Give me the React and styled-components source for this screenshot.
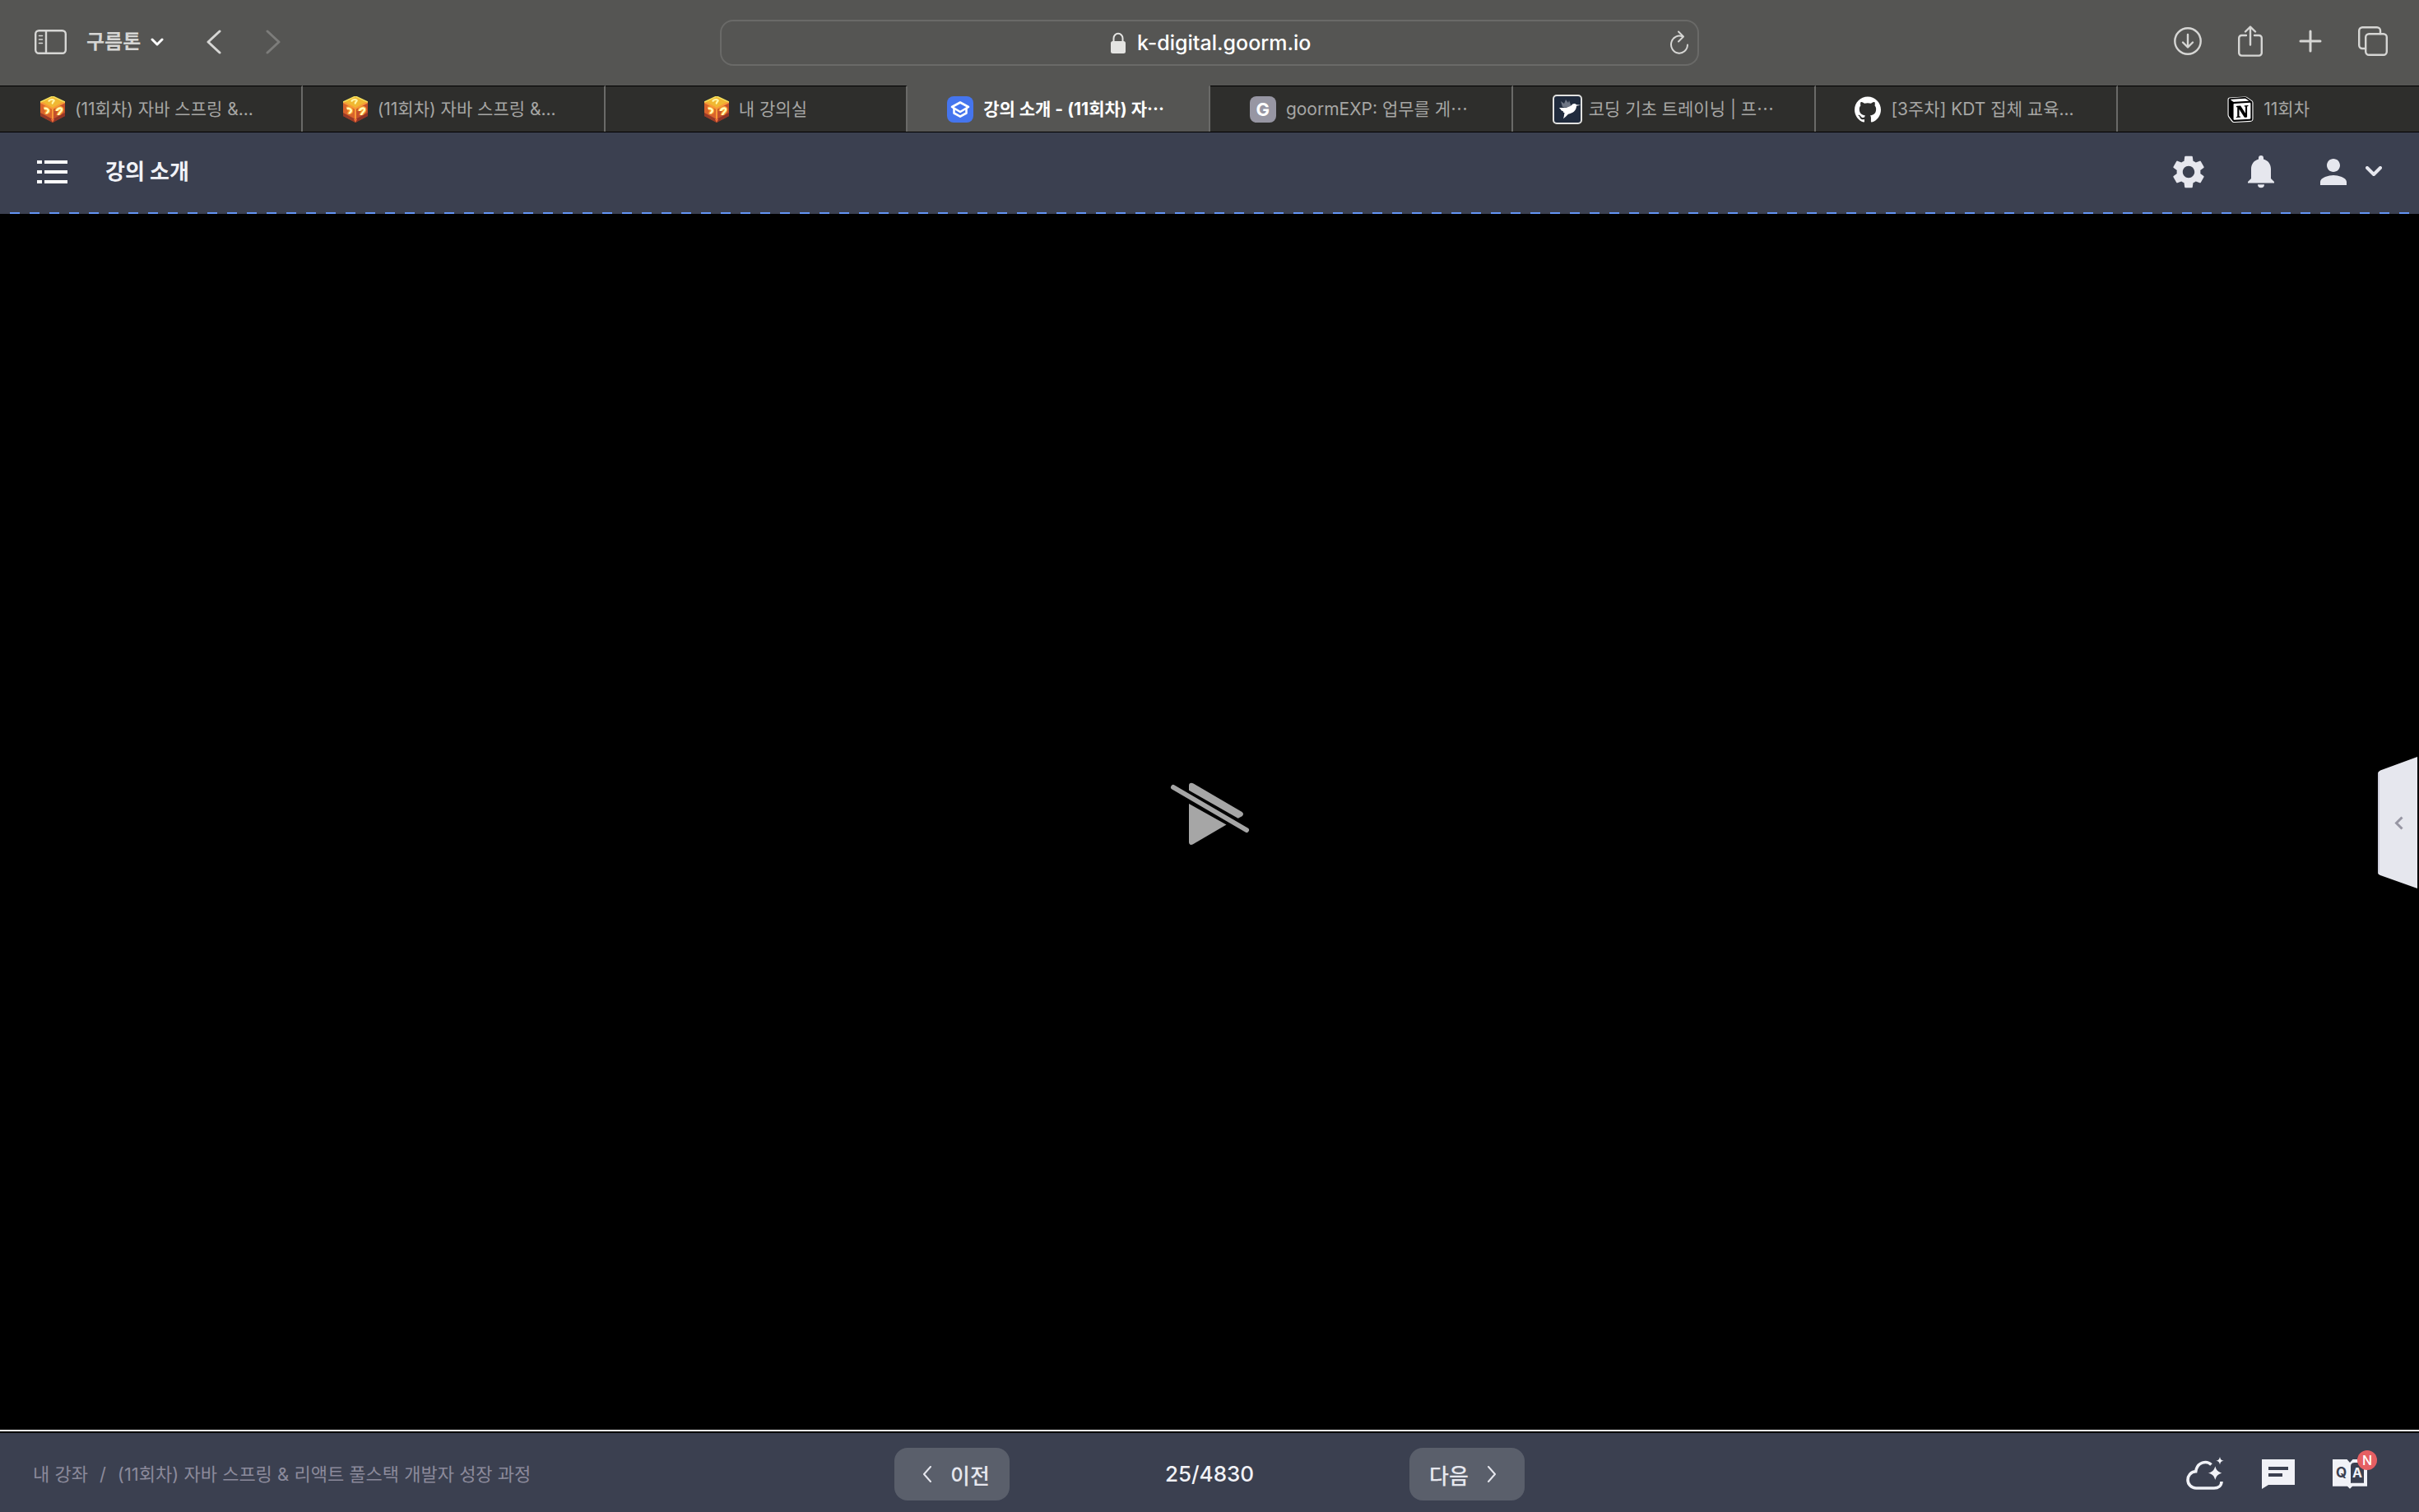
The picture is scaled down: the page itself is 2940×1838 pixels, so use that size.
import React from 'react';
import styled, { createGlobalStyle } from 'styled-components';
import { MdSettings, MdPerson } from 'react-icons/md';
import { SiGithub, SiNotion } from 'react-icons/si';

const GlobalStyle = createGlobalStyle`
  * {
    box-sizing: border-box;
  }
  body {
    margin: 0;
    background-color: #000;
    font-family: Inter, 'Noto Sans CJK KR', sans-serif;
  }
  button, input {
    font-family: inherit;
    margin: 0;
    padding: 0;
    border: none;
    background: none;
    color: inherit;
  }
  button {
    cursor: pointer;
  }
  a {
    color: inherit;
    text-decoration: none;
  }
  svg {
    display: block;
    flex-shrink: 0;
  }
`;

const Page = styled.div`
  display: flex;
  flex-direction: column;
  min-height: 100vh;
`;

/* Browser toolbar */

const Toolbar = styled.header`
  display: grid;
  grid-template-columns: 1fr minmax(0, 1190px) 1fr;
  align-items: center;
  height: 104px;
  background-color: #555553;
  color: #d6d6d4;
`;

const ToolbarLeft = styled.div`
  display: flex;
  align-items: center;
  padding: 0 0 2px 42px;
`;

const ToolbarRight = styled.div`
  display: flex;
  align-items: center;
  justify-content: flex-end;
  gap: 44px;
  padding: 0 38px 4px 0;
`;

const IconButton = styled.button`
  display: flex;
  align-items: center;
  justify-content: center;
  opacity: ${(props) => (props.$dim ? 0.3 : 1)};
`;

const ProfileButton = styled.button`
  display: flex;
  align-items: center;
  gap: 12px;
  margin: 0 52px 0 23px;
  font-size: 24px;
  font-weight: 700;
  line-height: 32px;
`;

const NavButtons = styled.div`
  display: flex;
  gap: 54px;
`;

const AddressBar = styled.form`
  display: grid;
  grid-template-columns: 1fr auto 1fr;
  align-items: center;
  height: 56px;
  padding: 0 10px 0 16px;
  border: 2px solid #6a6a68;
  border-radius: 16px;
`;

const AddressLabel = styled.label`
  grid-column: 2;
  display: flex;
  align-items: center;
  gap: 14px;
`;

const AddressInput = styled.input`
  width: 214px;
  color: #fff;
  font-size: 25px;
  font-weight: 500;
  line-height: 32px;
  outline: none;
`;

const ReloadButton = styled(IconButton)`
  justify-self: end;
`;

/* Browser tabs */

const TabStrip = styled.nav`
  display: flex;
  height: 57px;
  background-color: #555553;
  border-bottom: 1px solid #000;
`;

const Tab = styled.a`
  box-sizing: content-box;
  flex: 1 1 0;
  min-width: 0;
  display: flex;
  align-items: center;
  justify-content: center;
  gap: ${(props) => (props.$wideIcon ? '8px' : '12px')};
  border-top: 1px solid ${(props) => (props.$active ? '#555553' : '#000')};
  border-right: 2px solid #6a6a68;
  background-color: ${(props) => (props.$active ? '#555553' : '#2e2e2c')};
  color: ${(props) => (props.$active ? '#fff' : '#a6a6a4')};
  font-size: 21px;
  font-weight: ${(props) => (props.$active ? 700 : 400)};
  line-height: 32px;
  &:last-child {
    border-right: none;
  }
`;

const TabTitle = styled.span`
  width: ${(props) => (props.$cut ? '226px' : 'auto')};
  overflow: hidden;
  white-space: nowrap;
`;

const LetterIcon = styled.span`
  display: flex;
  align-items: center;
  justify-content: center;
  width: 32px;
  height: 32px;
  border-radius: 8px;
  background-color: #9796a3;
  color: #fff;
  font-size: 22px;
  font-weight: 700;
`;

/* Lecture header */

const LectureHeader = styled.header`
  display: flex;
  align-items: center;
  height: 99px;
  padding: 0 45px 3px;
  background-color: #3b4050;
  background-image: repeating-linear-gradient(to right, transparent 0 12px, #6394f5 12px 24px);
  background-size: 100% 2px;
  background-position: bottom;
  background-repeat: no-repeat;
`;

const LectureTitle = styled.h1`
  flex: 1;
  margin: 0 0 0 45px;
  color: #f1f2f7;
  font-size: 26px;
  font-weight: 700;
  line-height: 36px;
`;

const HeaderActions = styled.div`
  display: flex;
  align-items: center;
  gap: 48px;
  color: #e6e7ee;
`;

const AccountButton = styled(IconButton)`
  gap: 15px;
`;

/* Video area */

const VideoArea = styled.main`
  position: relative;
  flex: 1;
  display: flex;
  border-bottom: 2px solid #000;
  background-color: #000;
`;

const VideoFrame = styled.div`
  flex: 1;
  display: flex;
  align-items: center;
  justify-content: center;
  border-bottom: 2px solid #fff;
`;

const SidePanelButton = styled.button`
  position: absolute;
  top: 50%;
  right: 2px;
  transform: translateY(-50%);
`;

/* Footer */

const Footer = styled.footer`
  display: grid;
  grid-template-columns: 1fr auto 1fr;
  align-items: center;
  height: 96px;
  padding: 4px 50px 0 40px;
  background-color: #3b4050;
`;

const Breadcrumb = styled.nav`
  display: flex;
  gap: 14px;
  color: #8b8a9b;
  font-size: 22px;
  line-height: 32px;
  white-space: nowrap;
`;

const Pager = styled.div`
  display: flex;
  align-items: center;
  margin-left: 10px;
`;

const PagerButton = styled.button`
  display: flex;
  align-items: center;
  justify-content: center;
  gap: 12px;
  width: 140px;
  height: 64px;
  border-radius: 16px;
  background-color: #5a5f6b;
  color: #e6e7ee;
  font-size: 26px;
  font-weight: 500;
`;

const PageCount = styled.span`
  width: 486px;
  color: #f1f2f7;
  font-size: 26px;
  font-weight: 500;
  line-height: 36px;
  text-align: center;
`;

const FooterActions = styled.div`
  display: flex;
  align-items: center;
  justify-content: flex-end;
  gap: 46px;
  padding-right: 13px;
  color: #f1f2f7;
`;

const QnaButton = styled(IconButton)`
  position: relative;
`;

const Badge = styled.span`
  position: absolute;
  top: -11px;
  right: -12px;
  display: flex;
  align-items: center;
  justify-content: center;
  width: 24px;
  height: 24px;
  border-radius: 50%;
  background-color: #e55f63;
  color: #fff;
  font-size: 16px;
  font-weight: 500;
`;

const stroke = {
  fill: 'none',
  stroke: 'currentColor',
  strokeLinecap: 'round',
  strokeLinejoin: 'round',
};

const Chevron = ({ width, height, weight, points, color }) => (
  <svg width={width} height={height} viewBox={`0 0 ${width} ${height}`} {...stroke} stroke={color || 'currentColor'} strokeWidth={weight}>
    <polyline points={points} />
  </svg>
);

const SidebarIcon = () => (
  <svg width="40" height="30" viewBox="0 0 40 30" {...stroke} strokeWidth="2.4">
    <rect x="1.2" y="1.2" width="36.6" height="27.6" rx="4" />
    <path d="M14 1.5v27" />
    <path d="M5.5 7.5h4M5.5 12h4M5.5 16.5h4" strokeWidth="1.6" />
  </svg>
);

const LockIcon = () => (
  <svg width="18" height="26" viewBox="0 0 18 26">
    <path d="M3.5 12V7.5a5.500 5.700 0 0 1 11 0V12" fill="none" stroke="#e4e4e2" strokeWidth="2" />
    <rect x="0" y="11" width="18" height="15" rx="2.5" fill="#e4e4e2" />
  </svg>
);

const ReloadIcon = () => (
  <svg width="24" height="30" viewBox="0 0 24 30" {...stroke} strokeWidth="2">
    <path d="M16 7.5A10 10.5 0 1 0 22 17.5" />
    <path d="M11 1.500l6 6-6 6" />
  </svg>
);

const DownloadIcon = () => (
  <svg width="34" height="34" viewBox="0 0 34 34" {...stroke} strokeWidth="2.4">
    <circle cx="17" cy="17" r="15.7" />
    <path d="M17 9v15M11 18.500l6 6 6-6" />
  </svg>
);

const ShareIcon = () => (
  <svg width="30" height="38" viewBox="0 0 30 38" {...stroke} strokeWidth="2.4">
    <path d="M10 12H4.500a3.300 3.300 0 0 0-3.300 3.300v18a3.300 3.300 0 0 0 3.300 3.300h21a3.300 3.300 0 0 0 3.300-3.300v-18A3.300 3.300 0 0 0 25.500 12H20" />
    <path d="M15 23.500V2M9 7.500L15 1.500l6 6" />
  </svg>
);

const PlusIcon = () => (
  <svg width="28" height="28" viewBox="0 0 28 28" {...stroke} strokeWidth="3">
    <path d="M14 2v24M2 14h24" />
  </svg>
);

const TabsIcon = () => (
  <svg width="36" height="36" viewBox="0 0 36 36" {...stroke} strokeWidth="2.4">
    <rect x="9.2" y="9.2" width="25.6" height="25.6" rx="4" />
    <path d="M9 27H5.200a4 4 0 0 1-4-4V5.200a4 4 0 0 1 4-4H23a4 4 0 0 1 4 4V9" />
  </svg>
);

const CubeIcon = () => (
  <svg width="30" height="32" viewBox="0 0 30 32">
    <path d="M15 0L30 7 15 15 0 7z" fill="#f0b832" />
    <path d="M0 7l15 8v17L0 24z" fill="#d9632c" />
    <path d="M30 7l-15 8v17l15-8z" fill="#c4502c" />
    <path d="M0 20l15 8v4L0 24zM30 20l-15 8v4l15-8z" fill="#7d2a25" opacity="0.7" />
    <path d="M0 7l15 8 15-8M15 15v13" fill="none" stroke="#f79a38" strokeWidth="2" />
    <path d="M15 0L0 7M15 0l15 7" stroke="#f5e25e" strokeWidth="1.5" />
    <path d="M10 6.500c2-4 9-2.500 6 0-1 1-2 1.500-1 3" fill="none" stroke="#fff6a8" strokeWidth="2.2" />
    <path d="M4.500 15c3-1 6 1 5 3.500-1 1.500-2 1-2 3" fill="none" stroke="#f9a02e" strokeWidth="5" />
    <path d="M20 18c0-3 6-5 6-2 0 3-4 4-4 7" fill="none" stroke="#f9a02e" strokeWidth="5" />
    <path d="M4.500 15c3-1 6 1 5 3.500-1 1.500-2 1-2 3" fill="none" stroke="#fffbb8" strokeWidth="2.4" />
    <path d="M20 18c0-3 6-5 6-2 0 3-4 4-4 7" fill="none" stroke="#fffbb8" strokeWidth="2.4" />
    <path d="M13 28l2-1 2 1-2 4z" fill="#f0703a" />
  </svg>
);

const LectureIcon = () => (
  <svg width="32" height="32" viewBox="0 0 32 32">
    <rect width="32" height="32" rx="8" fill="#4575ee" />
    <g fill="none" stroke="#fff" strokeWidth="2.6" strokeLinejoin="round" strokeLinecap="round">
      <path d="M16 7.500L26 13l-10 6-10-6z" />
      <path d="M8.500 15v5.500L16 24.700l7.500-4.200V15" />
    </g>
  </svg>
);

const BirdIcon = () => (
  <svg width="36" height="36" viewBox="0 0 36 36">
    <rect x="1" y="1" width="34" height="34" rx="4" fill="#202b3d" stroke="#e2e2e0" strokeWidth="2" />
    <path d="M12 15L10 8l4 3 2-5 3 4 1-3 3 8z" fill="#6d7584" />
    <path d="M8 16c7 0 11 0 15-3 1-2 4-3 6-.7l5 .5-5 1c0 6-5 9-10 10-2 2-4 4-6 5.500 1-3 1-5 1.500-7-2-.5-2-1.500-1.500-2-2-.5-3.500-1.500-3-2.300-1-.5-1.500-1.300-2-2z" fill="#fff" />
  </svg>
);

const NotionLogo = styled.span`
  display: grid;
  place-items: center;
  width: 32px;
  height: 32px;
  & > * {
    grid-area: 1 / 1;
  }
`;

const NotionIcon = () => (
  <NotionLogo>
    <svg width="32" height="32" viewBox="0 0 32 32">
      <path d="M3 1.500L21 .5c2 0 3 .5 4 1.200l5 3.500c1 .8 1.500 1.500 1.500 3V27c0 2.500-1 3.700-3.500 4L9 32c-2 0-3-.3-4-1.700L1.500 25.500C.8 24.500.5 23.700.5 22.500V4c0-1.500 1-2.300 2.500-2.500z" fill="#fff" />
    </svg>
    <SiNotion size={30} color="#000" />
  </NotionLogo>
);

const MenuIcon = () => (
  <svg width="38" height="28" viewBox="0 0 38 28" fill="#fff">
    <path d="M0 0h6v4H0zM9 0h28v4H9zM0 12h6v4H0zM9 12h28v4H9zM0 24h6v4H0zM9 24h28v4H9z" />
  </svg>
);

const BellIcon = () => (
  <svg width="32" height="40" viewBox="0 0 32 40" fill="currentColor">
    <path d="M16 0a3 3 0 0 1 3 3v1.500c5.500 1.500 9 6 9 12V28l4 4v1.500H0V32l4-4V16.500c0-6 3.500-10.500 9-12V3a3 3 0 0 1 3-3z" />
    <path d="M12 35.300h8a4 4 0 0 1-8 0z" />
  </svg>
);

const VideoOffIcon = () => (
  <svg width="100" height="100" viewBox="0 0 100 100" fill="#a6a6a6">
    <path d="M6 8L95 60" stroke="#a6a6a6" strokeWidth="6" strokeLinecap="round" />
    <path d="M25 28l45.500 25.500L29.500 77.500C27 78.500 25 77.500 25 74.500z" />
    <path d="M25 11.700V6c0-3 2.500-4 5.500-2.500L89.500 38c2 1.500 2 3.700 0 5.200L84.700 45.700z" />
  </svg>
);

const SidePanelIcon = () => (
  <svg width="48" height="160" viewBox="0 0 48 160">
    <path d="M48 0v160L3 144q-3-1-3-3V20q0-2 3-3.500z" fill="#e6e7ee" />
    <path d="M1 20v121" stroke="#c6c6d6" strokeWidth="1.5" />
    <path d="M29.500 73.500l-7 7 7 7" fill="none" stroke="#9796a3" strokeWidth="3" />
  </svg>
);

const CloudIcon = () => (
  <svg width="47" height="44" viewBox="0 0 47 44">
    <path d="M31.500 10.500C26 5 14.500 7 12.700 18.800 6.500 19 3 24 3 29c0 5.500 4.500 10 10 10h22c5 0 9-3 9-8" fill="none" stroke="currentColor" strokeWidth="3.6" />
    <path d="M36.300 9.500c1.700 7.500 3.500 9.500 10.700 11.200-7.200 1.700-9 3.700-10.700 11.200-1.700-7.500-3.500-9.500-10.700-11.200 7.200-1.700 9-3.700 10.700-11.200z" fill="currentColor" stroke="#3b4050" strokeWidth="1.5" />
    <path d="M42 1c.8 3.300 1.500 4 4.700 4.700-3.200.7-3.900 1.400-4.700 4.700-.8-3.300-1.500-4-4.700-4.700C40.500 5 41.200 4.300 42 1z" fill="currentColor" />
  </svg>
);

const ChatIcon = () => (
  <svg width="40" height="36" viewBox="0 0 40 36">
    <path d="M0 0h40v31H8l-8 5z" fill="currentColor" />
    <path d="M8 9h24v4H8zM8 17h17v4H8z" fill="#3b4050" />
  </svg>
);

const QnaIcon = () => (
  <svg width="42" height="36" viewBox="0 0 42 36">
    <path d="M0 0h17.500L21 4l3.500-4H42v32.700H24L21 35.700l-3-3H0z" fill="currentColor" />
    <path d="M22 29V8.500q0-4.500 4.500-4.500H38v24.700H23z" fill="#3b4050" />
    <text x="10.5" y="22" fontSize="17" fontWeight="700" textAnchor="middle" fill="#3b4050">Q</text>
    <text x="30" y="22" fontSize="16" fontWeight="700" textAnchor="middle" fill="currentColor">A</text>
  </svg>
);

const tabs = [
  { title: '(11회차) 자바 스프링 &...', icon: <CubeIcon />, cut: true },
  { title: '(11회차) 자바 스프링 &...', icon: <CubeIcon />, cut: true },
  { title: '내 강의실', icon: <CubeIcon /> },
  { title: '강의 소개 - (11회차) 자⋯', icon: <LectureIcon />, cut: true, active: true },
  { title: 'goormEXP: 업무를 게⋯', icon: <LetterIcon>G</LetterIcon>, cut: true },
  { title: '코딩 기초 트레이닝 | 프⋯', icon: <BirdIcon />, cut: true, wideIcon: true },
  { title: '[3주차] KDT 집체 교육...', icon: <SiGithub size={32} color="#fff" />, cut: true },
  { title: '11회차', icon: <NotionIcon /> },
];

const App = () => {
  return (
    <>
      <GlobalStyle />
      <Page>
        <Toolbar>
          <ToolbarLeft>
            <IconButton aria-label="사이드바"><SidebarIcon /></IconButton>
            <ProfileButton>
              구름톤
              <Chevron width={16} height={10} weight={3} points="2,2 8,8 14,2" color="#fff" />
            </ProfileButton>
            <NavButtons>
              <IconButton aria-label="뒤로"><Chevron width={18} height={30} weight={3} points="16,2 2,15 16,28" /></IconButton>
              <IconButton aria-label="앞으로" $dim><Chevron width={18} height={30} weight={3} points="2,2 16,15 2,28" /></IconButton>
            </NavButtons>
          </ToolbarLeft>
          <AddressBar onSubmit={(e) => e.preventDefault()}>
            <AddressLabel>
              <LockIcon />
              <AddressInput aria-label="주소" defaultValue="k-digital.goorm.io" spellCheck={false} />
            </AddressLabel>
            <ReloadButton type="button" aria-label="새로고침"><ReloadIcon /></ReloadButton>
          </AddressBar>
          <ToolbarRight>
            <IconButton aria-label="다운로드"><DownloadIcon /></IconButton>
            <IconButton aria-label="공유"><ShareIcon /></IconButton>
            <IconButton aria-label="새 탭"><PlusIcon /></IconButton>
            <IconButton aria-label="탭 개요"><TabsIcon /></IconButton>
          </ToolbarRight>
        </Toolbar>

        <TabStrip>
          {tabs.map((tab, index) => (
            <Tab href="#" key={index} $active={tab.active} $wideIcon={tab.wideIcon}>
              {tab.icon}
              <TabTitle $cut={tab.cut}>{tab.title}</TabTitle>
            </Tab>
          ))}
        </TabStrip>

        <LectureHeader>
          <IconButton aria-label="목차"><MenuIcon /></IconButton>
          <LectureTitle>강의 소개</LectureTitle>
          <HeaderActions>
            <IconButton aria-label="설정"><MdSettings size={48} /></IconButton>
            <IconButton aria-label="알림"><BellIcon /></IconButton>
            <AccountButton aria-label="계정">
              <MdPerson size={48} />
              <Chevron width={20} height={14} weight={4} points="2,2 10,10 18,2" />
            </AccountButton>
          </HeaderActions>
        </LectureHeader>

        <VideoArea>
          <VideoFrame>
            <VideoOffIcon />
          </VideoFrame>
          <SidePanelButton aria-label="패널 열기"><SidePanelIcon /></SidePanelButton>
        </VideoArea>

        <Footer>
          <Breadcrumb>
            <a href="#">내 강좌</a>
            <span>/</span>
            <a href="#">(11회차) 자바 스프링 &amp; 리액트 풀스택 개발자 성장 과정</a>
          </Breadcrumb>
          <Pager>
            <PagerButton>
              <Chevron width={32} height={20} weight={2} points="20,1 12,10 20,19" />
              이전
            </PagerButton>
            <PageCount>25/4830</PageCount>
            <PagerButton>
              다음
              <Chevron width={32} height={20} weight={2} points="12,1 20,10 12,19" />
            </PagerButton>
          </Pager>
          <FooterActions>
            <IconButton aria-label="클라우드"><CloudIcon /></IconButton>
            <IconButton aria-label="채팅"><ChatIcon /></IconButton>
            <QnaButton aria-label="질문과 답변">
              <QnaIcon />
              <Badge>N</Badge>
            </QnaButton>
          </FooterActions>
        </Footer>
      </Page>
    </>
  );
};

export default App;
